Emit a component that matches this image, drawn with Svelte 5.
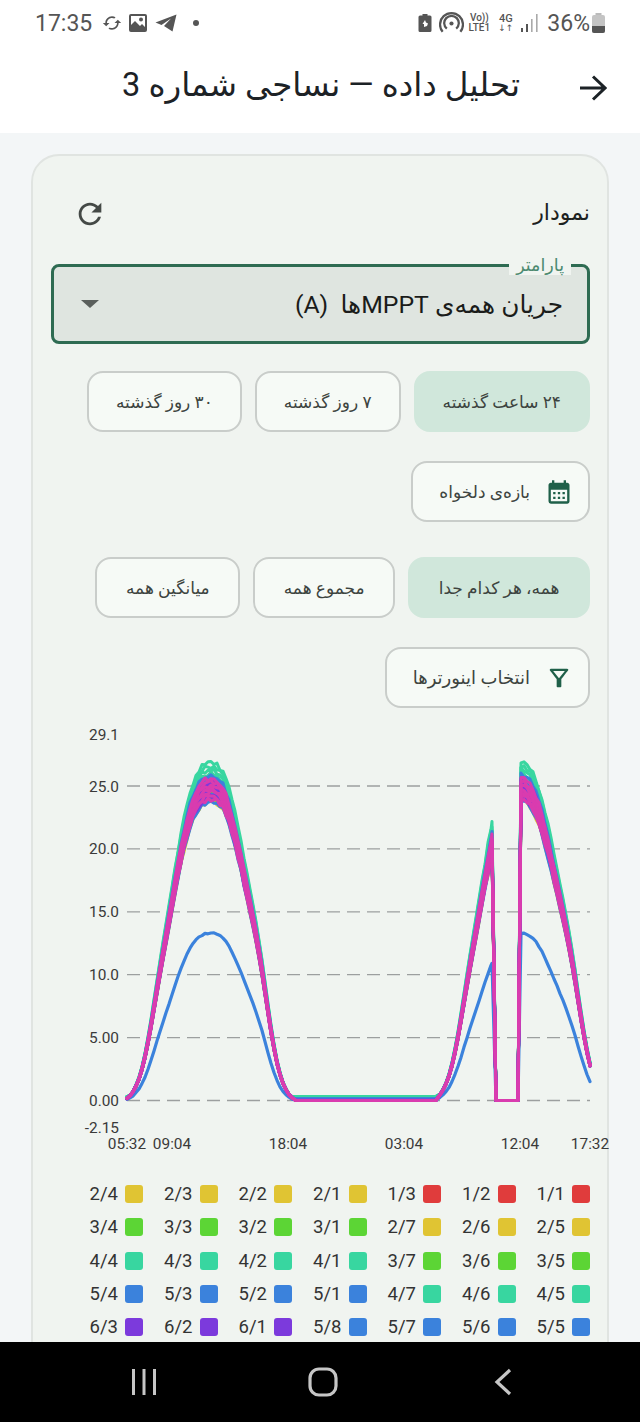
<script>
  const ranges = ["۲۴ ساعت گذشته", "۷ روز گذشته", "۳۰ روز گذشته"];
  const modes = ["همه، هر کدام جدا", "مجموع همه", "میانگین همه"];

  // inverter groups: count of MPPTs, colour, and how far their output strays from the shared curve
  const groups = [
    { n: 3, color: "#e03c3c", lo: 0.96, hi: 0.99, base: 0.1 },
    { n: 7, color: "#e0c433", lo: 0.93, hi: 0.98, base: 0.1 },
    { n: 7, color: "#5cd535", lo: 0.94, hi: 1.0, base: 0.15 },
    { n: 7, color: "#38d6a0", lo: 0.98, hi: 1.05, base: 0.3 },
    { n: 8, color: "#3b82dc", lo: 0.93, hi: 1.025, base: 0.1 },
    { n: 7, color: "#7c3adc", lo: 0.94, hi: 0.99, base: 0 },
    { n: 7, color: "#d93caf", lo: 0.935, hi: 1.0, base: 0 }
  ];

  const legend = groups.flatMap((g, i) =>
    Array.from({ length: g.n }, (_, k) => ({ name: `${i + 1}/${k + 1}`, color: g.color }))
  );

  // chart is drawn in page pixels, see viewBox on the svg
  const left = 127;
  const right = 590;
  const zero = 1100.5;
  const perUnit = 12.58;
  const ticks = [
    { label: "25.0", v: 25 },
    { label: "20.0", v: 20 },
    { label: "15.0", v: 15 },
    { label: "10.0", v: 10 },
    { label: "5.00", v: 5 },
    { label: "0.00", v: 0 }
  ];
  const hours = [
    { label: "05:32", x: 127 },
    { label: "09:04", x: 172 },
    { label: "18:04", x: 288 },
    { label: "03:04", x: 404 },
    { label: "12:04", x: 520 },
    { label: "17:32", x: 590 }
  ];

  const y = (v) => zero - v * perUnit;

  const shape = [
    [127, 1100.5], [135, 1090], [140, 1077], [145, 1060], [150, 1030], [159, 973], [165, 937],
    [170, 910], [180, 848], [192, 797], [200, 783], [212, 776], [220, 783], [227, 793],
    [240, 848], [252, 910], [258, 937], [263, 973], [272, 1037], [277, 1067], [283, 1085], [292, 1100.5]
  ];

  function rawBell(x) {
    if (x <= shape[0][0] || x >= shape[shape.length - 1][0]) return 0;
    for (let i = 1; i < shape.length; i++) {
      if (x <= shape[i][0]) {
        const [x0, y0] = shape[i - 1];
        const [x1, y1] = shape[i];
        const py = y0 + ((x - x0) / (x1 - x0)) * (y1 - y0);
        return (zero - py) / perUnit;
      }
    }
    return 0;
  }

  // small moving average so the table's corners don't show
  function bell(x) {
    let sum = 0;
    for (let d = -6; d <= 6; d += 2) sum += rawBell(x + d);
    return sum / 7;
  }

  let seed = 7;
  function rand() {
    seed = (seed * 16807) % 2147483647;
    return seed / 2147483647 - 0.5;
  }

  function line(scale, base, noise) {
    const pts = [];
    for (let x = left; x <= 292; x += 3) pts.push([x, bell(x)]);
    pts.push([296, base], [436, base]);
    for (let x = 440; x <= 491; x += 3) pts.push([x, bell(x - 309)]);
    pts.push([492, bell(183)], [496, -100], [518, -100]);
    for (let x = 521; x <= right; x += 3) pts.push([x, bell(212 + (x - 521) * 0.95)]);
    return pts
      .map(([x, v]) => {
        if (v === -100) return `${x},${y(0).toFixed(1)}`;
        const val = Math.max(base, v * scale + (v > 18 ? rand() * noise : rand() * 0.05));
        return `${x},${y(val).toFixed(1)}`;
      })
      .join(" ");
  }

  const series = [];
  groups.forEach((g, i) => {
    for (let k = 0; k < g.n; k++) {
      // 5/8 only has half of its strings connected
      const half = i === 4 && k === 7;
      const scale = half ? 0.52 : g.lo + ((g.hi - g.lo) * k) / (g.n - 1);
      series.push({ color: g.color, half, points: line(scale, half ? 0 : g.base, half ? 0.1 : 0.4) });
    }
  });
</script>

<div class="screen">
  <div class="status">
    <div class="status-left">
      <span class="time">17:35</span>
      <svg class="ico sync" viewBox="0 0 24 24"><path d="M19 8l-4 4h3c0 3.310-2.690 6-6 6-1.010 0-1.970-.25-2.800-.7l-1.460 1.460C8.970 19.540 10.430 20 12 20c4.420 0 8-3.580 8-8h3l-4-4zM6 12c0-3.310 2.690-6 6-6 1.010 0 1.970.25 2.800.7l1.460-1.460C15.030 4.460 13.570 4 12 4c-4.420 0-8 3.580-8 8H1l4 4 4-4H6z" /></svg>
      <svg class="ico pic" viewBox="0 0 18 18"><path fill-rule="evenodd" d="M2 0h14a2 2 0 0 1 2 2v14a2 2 0 0 1-2 2H2a2 2 0 0 1-2-2V2a2 2 0 0 1 2-2zm0 2v9l4-4 5 5 2-2 3 3V2H2zm10 1.500a2 2 0 1 1 0 4 2 2 0 0 1 0-4z" /></svg>
      <svg class="ico plane" viewBox="0 0 22 18"><path d="M21.500 0.500 0.500 8.500l6 2.500L16 4.500 9 12l8.500 5.500z" /></svg>
      <span class="dot"></span>
    </div>
    <div class="status-right">
      <svg class="ico saver" viewBox="0 0 14 18"><path fill-rule="evenodd" d="M4.500 0h5v1.500H12A1.500 1.500 0 0 1 13.500 3v13.500A1.500 1.500 0 0 1 12 18H2A1.500 1.500 0 0 1 .5 16.500V3A1.500 1.500 0 0 1 2 1.500h2.500zM7 6 4.500 10H6v3l3-1 1-2.500-2-1z" /></svg>
      <svg class="ico hotspot" viewBox="0 0 24 24" fill="none" stroke="#555" stroke-width="2.200"><circle cx="12" cy="12" r="2" fill="#555" stroke="none" /><path d="M7.500 17a7 7 0 1 1 9 0M3.500 20a11 11 0 1 1 17 0" /></svg>
      <span class="net"><span>Vo))</span><span>LTE1</span></span>
      <span class="net four"><span>4G</span><span class="arrows">↓↑</span></span>
      <svg class="ico signal" viewBox="0 0 18 18"><rect x="0" y="14" width="2" height="4" fill="#555" /><rect x="5" y="10" width="2" height="8" fill="#555" /><rect x="10" y="5" width="1.600" height="13" fill="#aaa" /><rect x="15" y="0" width="1.600" height="18" fill="#aaa" /></svg>
      <span class="pct">36%</span>
      <svg class="ico batt" viewBox="0 0 15 20"><rect x="4.500" y="0" width="6" height="3" fill="#bbb" /><rect x="1" y="2" width="13" height="18" rx="2" fill="#c4c4c4" /><path d="M1 13h13v5a2 2 0 0 1-2 2H3a2 2 0 0 1-2-2z" fill="#555" /></svg>
    </div>
  </div>

  <header class="appbar" dir="rtl">
    <svg class="back" viewBox="0 0 28 26" fill="none" stroke="#1c2226" stroke-width="3"><path d="M27 13H2M14 1.500 2 13l12 11.500" transform="translate(28 0) scale(-1 1)" /></svg>
    <h1>تحلیل داده — نساجی شماره 3</h1>
  </header>

  <main class="page">
    <section class="card" dir="rtl">
      <div class="card-head">
        <h2>نمودار</h2>
        <svg class="refresh" viewBox="0 0 24 24"><path d="M17.650 6.350C16.200 4.900 14.210 4 12 4c-4.420 0-7.990 3.580-7.990 8s3.570 8 7.990 8c3.730 0 6.840-2.550 7.730-6h-2.080c-.82 2.330-3.040 4-5.650 4-3.310 0-6-2.690-6-6s2.690-6 6-6c1.660 0 3.140.69 4.220 1.780L13 11h7V4l-2.350 2.350z" /></svg>
      </div>

      <div class="select">
        <span class="select-label">پارامتر</span>
        <span class="select-value">جریان همه‌ی MPPTها  (A)</span>
        <span class="caret"></span>
      </div>

      <div class="chips first">
        {#each ranges as r, i}
          <button class="chip" class:on={i === 0}>{r}</button>
        {/each}
      </div>
      <div class="chips custom">
        <button class="chip with-ico">
          <svg class="chip-ico" viewBox="0 0 24 24"><path d="M19 4h-1V2h-2v2H8V2H6v2H5c-1.110 0-1.990.9-1.990 2L3 20a2 2 0 0 0 2 2h14c1.100 0 2-.9 2-2V6c0-1.100-.9-2-2-2zm0 16H5V10h14v10zM9 14H7v-2h2v2zm4 0h-2v-2h2v2zm4 0h-2v-2h2v2zm-8 4H7v-2h2v2zm4 0h-2v-2h2v2zm4 0h-2v-2h2v2z" /></svg>
          بازه‌ی دلخواه
        </button>
      </div>
      <div class="chips modes">
        {#each modes as m, i}
          <button class="chip" class:on={i === 0}>{m}</button>
        {/each}
      </div>
      <div class="chips pick">
        <button class="chip with-ico">
          <svg class="chip-ico" viewBox="0 0 24 24"><path d="M7 6h10l-5.010 6.300L7 6zm-2.750-.39C6.270 8.200 10 13 10 13v6c0 .55.45 1 1 1h2c.55 0 1-.45 1-1v-6s3.720-4.800 5.740-7.390A.998.998 0 0 0 18.950 4H5.040c-.83 0-1.300.95-.79 1.610z" /></svg>
          <span class="wide">انتخاب اینورترها</span>
        </button>
      </div>

      <svg class="chart" viewBox="51 720 539 445">
        <text class="axis" x="119" y="740" text-anchor="end">29.1</text>
        <text class="axis" x="119" y="1133" text-anchor="end">-2.15</text>
        {#each ticks as t}
          <line class="grid" x1={left} x2={right} y1={y(t.v)} y2={y(t.v)} />
          <text class="axis" x="119" y={y(t.v) + 5.500} text-anchor="end">{t.label}</text>
        {/each}
        {#each series as s}
          <polyline points={s.points} fill="none" stroke={s.color} stroke-width={s.half ? 3.2 : 3} stroke-linejoin="round" stroke-linecap="round" />
        {/each}
        {#each hours as h}
          <text class="axis" x={h.x} y="1149" text-anchor="middle">{h.label}</text>
        {/each}
      </svg>

      <div class="legend">
        {#each legend as item}
          <div class="legend-item">
            <span class="swatch" style="background: {item.color}"></span>
            <span class="legend-name">{item.name}</span>
          </div>
        {/each}
      </div>
    </section>
  </main>

  <nav class="navbar">
    <svg class="nav-ico" width="26" height="28" viewBox="0 0 26 28" fill="none" stroke="#c6c6c6" stroke-width="3"><path d="M2.500 1v26M13 1v26M23.500 1v26" /></svg>
    <svg class="nav-ico" width="30" height="30" viewBox="0 0 30 30" fill="none" stroke="#c6c6c6" stroke-width="3.200"><rect x="2" y="2" width="26" height="26" rx="9" /></svg>
    <svg class="nav-ico" width="18" height="28" viewBox="0 0 18 28" fill="none" stroke="#c6c6c6" stroke-width="3.200"><path d="M16 2 3 14l13 12" /></svg>
  </nav>
</div>

<style>
  :global(body) {
    margin: 0;
    background: #f3f6f7;
  }
  .screen {
    position: relative;
    width: 640px;
    height: 1422px;
    overflow: hidden;
    font-family: Roboto, "DejaVu Sans", sans-serif;
    background: #f3f6f7;
  }
  .status {
    height: 46px;
    background: #fff;
    display: flex;
    justify-content: space-between;
    align-items: center;
    padding: 0 34px 0 35px;
    color: #555;
    fill: #555;
  }
  .status-left,
  .status-right {
    display: flex;
    align-items: center;
  }
  .time {
    font-size: 23px;
    margin-right: 10px;
  }
  .ico {
    display: block;
  }
  .sync {
    width: 20px;
    height: 20px;
    margin-right: 7px;
  }
  .pic {
    width: 18px;
    height: 18px;
    margin-right: 8px;
  }
  .plane {
    width: 22px;
    height: 18px;
    margin-right: 16px;
  }
  .dot {
    width: 6px;
    height: 6px;
    border-radius: 50%;
    background: #555;
  }
  .saver {
    width: 14px;
    height: 18px;
    margin-right: 7px;
  }
  .hotspot {
    width: 25px;
    height: 25px;
    margin-right: 5px;
  }
  .net {
    display: flex;
    flex-direction: column;
    align-items: center;
    font-size: 10px;
    line-height: 10px;
    font-weight: 500;
    margin-right: 8px;
  }
  .four {
    font-size: 11px;
  }
  .arrows {
    font-size: 9px;
    line-height: 9px;
  }
  .signal {
    width: 18px;
    height: 18px;
    margin-right: 8px;
  }
  .pct {
    font-size: 23px;
    margin-right: 1px;
  }
  .batt {
    width: 15px;
    height: 20px;
  }

  .appbar {
    box-sizing: border-box;
    height: 87px;
    background: #fff;
    display: flex;
    align-items: center;
    padding: 0 33px 6px 32px;
    gap: 59px;
    color: #1c2226;
  }
  .back {
    width: 28px;
    height: 26px;
    flex: none;
    margin-top: 2px;
  }
  h1 {
    margin: 0 0 4px;
    font-size: 32.500px;
    font-weight: 400;
    white-space: nowrap;
  }

  .page {
    padding: 21px 31px 0;
  }
  .card {
    box-sizing: border-box;
    width: 578px;
    border: 2px solid #e0e4e1;
    border-radius: 28px;
    background: #f0f4f0;
    padding: 36px 17px 40px 18px;
  }
  .card-head {
    display: flex;
    justify-content: space-between;
    align-items: center;
    height: 44px;
    color: #1c211e;
  }
  h2 {
    margin: 0 0 4px;
    font-size: 22px;
    font-weight: 400;
  }
  .refresh {
    width: 34px;
    height: 34px;
    margin-left: 22px;
    fill: #444946;
  }

  .select {
    position: relative;
    box-sizing: border-box;
    height: 80px;
    margin-top: 28px;
    border: 3px solid #2e6b52;
    border-radius: 8px;
    background: #dfe5e0;
    display: flex;
    align-items: center;
    justify-content: space-between;
    padding: 0 24px 0 27px;
  }
  .select-label {
    position: absolute;
    top: -12px;
    right: 16px;
    padding: 0 7px;
    background: #f0f4f0;
    color: #4c8a70;
    font-size: 17.500px;
    line-height: 20px;
  }
  .select-value {
    font-size: 24.800px;
    color: #1a1c1a;
    white-space: pre;
  }
  .caret {
    width: 0;
    height: 0;
    border-left: 9px solid transparent;
    border-right: 9px solid transparent;
    border-top: 8px solid #5a5f5c;
  }

  .chips {
    display: flex;
    gap: 13px;
  }
  .first {
    margin-top: 27px;
  }
  .custom {
    margin-top: 29px;
  }
  .modes {
    margin-top: 35px;
  }
  .pick {
    margin-top: 29px;
  }
  .chip {
    box-sizing: border-box;
    height: 61px;
    padding: 0 27px;
    border: 2px solid #c9cdca;
    border-radius: 16px;
    background: #f6faf6;
    color: #3d4440;
    font-family: inherit;
    font-size: 17px;
    display: flex;
    align-items: center;
    gap: 15px;
    white-space: nowrap;
  }
  .modes .chip {
    padding: 0 28.500px;
  }
  .chip.with-ico {
    padding: 0 15px 0 26px;
  }
  .wide {
    font-size: 18px;
  }
  .chip.on {
    background: #d0e7db;
    border-color: #d0e7db;
  }
  .chip-ico {
    width: 28px;
    height: 28px;
    fill: #1f6049;
    flex: none;
  }

  .chart {
    display: block;
    direction: ltr;
    width: 539px;
    height: 445px;
    margin-top: 12px;
    overflow: visible;
  }
  .axis {
    font-size: 15.400px;
    fill: #3a3a3a;
  }
  .grid {
    stroke: #9c9f9f;
    stroke-width: 1.300;
    stroke-dasharray: 13 7;
  }

  .legend {
    display: grid;
    grid-template-columns: repeat(7, 74.500px);
    row-gap: 15.300px;
    margin-top: 20px;
  }
  .legend-item {
    display: flex;
    align-items: center;
    gap: 7px;
    height: 18px;
  }
  .swatch {
    width: 18px;
    height: 18px;
    border-radius: 3px;
    flex: none;
  }
  .legend-name {
    font-size: 18.500px;
    color: #333;
    line-height: 18px;
  }

  .navbar {
    position: absolute;
    left: 0;
    right: 0;
    bottom: 0;
    height: 80px;
    background: #000;
    display: flex;
    align-items: center;
  }
  .nav-ico {
    position: absolute;
    top: 26px;
  }
  .nav-ico:nth-child(1) {
    left: 131px;
  }
  .nav-ico:nth-child(2) {
    left: 308px;
    top: 25px;
  }
  .nav-ico:nth-child(3) {
    left: 494px;
  }
</style>
